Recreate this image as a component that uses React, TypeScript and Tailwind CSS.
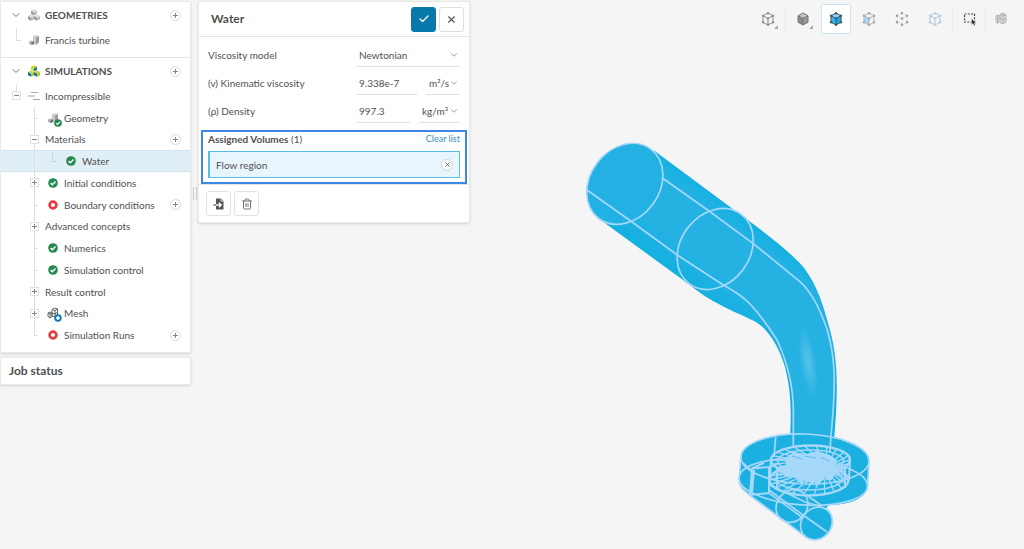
import { useId, useState } from 'react'
import type { ReactNode } from 'react'
import { Check, ChevronDown, Trash2, X } from 'lucide-react'

type Status = 'done' | 'open' | 'geometry' | 'mesh' | 'none';

type TreeItem = {
  label: string;
  status: Status;
  expandable?: boolean;
  expanded?: boolean;
  addable?: boolean;
  nested?: boolean;
  last?: boolean;
};

const treeItems: TreeItem[] = [
  { label: 'Geometry', status: 'geometry' },
  { label: 'Materials', status: 'none', expandable: true, expanded: true, addable: true },
  { label: 'Water', status: 'done', nested: true },
  { label: 'Initial conditions', status: 'done', expandable: true },
  { label: 'Boundary conditions', status: 'open', addable: true },
  { label: 'Advanced concepts', status: 'none', expandable: true },
  { label: 'Numerics', status: 'done' },
  { label: 'Simulation control', status: 'done' },
  { label: 'Result control', status: 'none', expandable: true },
  { label: 'Mesh', status: 'mesh', expandable: true },
  { label: 'Simulation Runs', status: 'open', addable: true, last: true },
];

const DoneIcon = ({ className = 'size-[10px]' }: { className?: string }) => (
  <svg viewBox="0 0 10 10" className={className} aria-hidden="true">
    <circle cx="5" cy="5" r="4.8" fill="#22894f" />
    <path d="M2.6 5.1 4.4 6.8 7.5 3.6" fill="none" stroke="#fff" strokeWidth="1.5" />
  </svg>
);

const OpenIcon = () => (
  <svg viewBox="0 0 10 10" className="size-[10px]" aria-hidden="true">
    <circle cx="5" cy="5" r="3.4" fill="#fff" stroke="#e5383f" strokeWidth="2.7" />
  </svg>
);

const PartIcon = () => (
  <svg viewBox="0 0 12 12" className="size-[12px]" aria-hidden="true">
    <path d="M5 2 8 1 11 2V8L8 11 5 9.5Z" fill="#c9c9c9" />
    <path d="M8 3 11 2V8L8 11Z" fill="#9c9c9c" />
    <path d="M5 2 8 1 11 2 8 3Z" fill="#e4e4e4" />
    <path d="M1 7.5 3.5 6.5 6 7.5V10L3.5 11 1 10Z" fill="#b4b4b4" />
    <path d="M3.5 8.3 6 7.5V10L3.5 11Z" fill="#707070" />
  </svg>
);

const ClusterIcon = ({ colored = false }: { colored?: boolean }) => {
  const top = colored ? '#c9d433' : '#dadada';
  const left = colored ? '#0b73ae' : '#9c9c9c';
  const right = colored ? '#b3c32b' : '#bcbcbc';
  const cubes = [[6, 0.2], [3, 5.6], [9, 5.6]];
  return (
    <svg viewBox="0 0 12 12" className="size-[12px]" aria-hidden="true">
      {cubes.map(([x, y]) => (
        <g key={`${x}-${y}`} transform={`translate(${x} ${y})`}>
          <path d="M0 0 3 1.5 0 3.2-3 1.5Z" fill={top} />
          <path d="M-3 1.5 0 3.2V6.2L-3 4.6Z" fill={colored && y < 1 ? top : left} />
          <path d="M0 3.2 3 1.5V4.6L0 6.2Z" fill={colored && y < 1 ? left : right} />
        </g>
      ))}
    </svg>
  );
};

const MeshIcon = () => (
  <svg viewBox="0 0 12 12" className="size-[12px]" aria-hidden="true">
    <g fill="none" stroke="#555" strokeWidth="0.9">
      <path d="M5 2.5 7.5 1 10.5 2V8L8 10 5 9Z" />
      <path d="M5 2.5 8 3.5 10.5 2M8 3.5V10M5 6 8 7 10.5 5" />
      <path d="M1 6 3 5 5 6V9.5L3 10.8 1 9.6ZM1 6 3 7 5 6M3 7V10.8" />
    </g>
  </svg>
);

const LinesIcon = () => (
  <svg viewBox="0 0 12 10" className="h-[10px] w-[12px]" aria-hidden="true">
    <path d="M3 1.5H10M0 5H7M5 8.5H12" stroke="#a5a5a5" strokeWidth="1.1" />
  </svg>
);

const SmallSign = ({ minus = false }: { minus?: boolean }) => (
  <svg viewBox="0 0 5 5" className="size-[5px]" shapeRendering="crispEdges" aria-hidden="true">
    <path d={minus ? 'M0 2.5H5' : 'M0 2.5H5M2.5 0V5'} stroke="#858585" strokeWidth="1" />
  </svg>
);

const StatusIcon = ({ status }: { status: Status }) => (
  <span className="relative flex w-[16px] items-center justify-center">
    {status === 'done' && <DoneIcon />}
    {status === 'open' && <OpenIcon />}
    {status === 'geometry' && (
      <>
        <PartIcon />
        <DoneIcon className="absolute -right-px -bottom-[3px] size-[8px]" />
      </>
    )}
    {status === 'mesh' && (
      <>
        <MeshIcon />
        <svg viewBox="0 0 8 8" className="absolute -right-px -bottom-[3px] size-[8px]" aria-hidden="true">
          <circle cx="4" cy="4" r="3.7" fill="#0878b5" />
          <path d="M4 2V6M2 4H6" stroke="#fff" strokeWidth="1.6" />
        </svg>
      </>
    )}
  </span>
);

const AddButton = ({ label }: { label: string }) => (
  <button
    type="button"
    aria-label={`Add to ${label}`}
    className="ml-auto flex size-[11px] items-center justify-center rounded-full border border-[#d9d9d9] bg-white"
  >
    <SmallSign />
  </button>
);

const ToggleBox = ({ label, expanded }: { label: string; expanded?: boolean }) => (
  <button
    type="button"
    aria-label={`Toggle ${label}`}
    aria-expanded={!!expanded}
    className="relative flex size-[9px] items-center justify-center border border-[#e0e0e0] bg-white"
  >
    <SmallSign minus={expanded} />
  </button>
);

const GroupHeader = ({ label, icon }: { label: string; icon: ReactNode }) => (
  <div className="flex h-[26px] items-center pr-[9px] pl-[6px]">
    <button type="button" aria-label={`Collapse ${label}`} className="flex w-[18px] justify-center text-[#777]">
      <ChevronDown size={12} strokeWidth={2} />
    </button>
    <span className="flex w-[18px] justify-center">{icon}</span>
    <h2 className="pl-[2px] font-bold">{label}</h2>
    <AddButton label={label} />
  </div>
);

const TreeRow = ({ item }: { item: TreeItem }) => (
  <li
    className={`flex items-center pr-[9px] pl-[24px] ${
      item.nested ? 'border-y border-[#cfe4ee] bg-[#e0eff6]' : ''
    }`}
  >
    <span className="relative flex w-[18px] items-center justify-center self-stretch">
      <span
        className={`absolute top-0 left-[9px] w-px bg-[#dedede] ${item.last ? 'h-1/2' : 'h-full'}`}
      />
      {item.expandable && <ToggleBox label={item.label} expanded={item.expanded} />}
      {!item.expandable && !item.nested && (
        <span className="absolute top-1/2 left-[9px] h-px w-[4px] bg-[#dedede]" />
      )}
    </span>
    {item.nested && (
      <span className="flex w-[18px] justify-end self-stretch pt-[2px] pr-[5px]">
        <span className="h-[9px] w-[4px] border-b border-l border-[#c8d3d9]" />
      </span>
    )}
    <span className="w-[2px]" />
    {item.status !== 'none' && <StatusIcon status={item.status} />}
    <span className={`whitespace-nowrap ${item.status === 'none' ? '' : 'pl-[3px]'}`}>
      {item.label}
    </span>
    {item.addable && <AddButton label={item.label} />}
  </li>
);

const Sidebar = () => (
  <aside className="w-[192px] shrink-0 pt-px pr-px">
    <nav aria-label="Project" className="border border-[#e9e9e9] bg-white text-[10px] shadow-sm">
      <section className="border-b border-[#e4e4e4] pb-[5px]">
        <GroupHeader label="GEOMETRIES" icon={<ClusterIcon />} />
        <div className="flex h-[24px] items-center pl-[6px]">
          <span className="flex w-[18px] justify-end self-stretch pr-[4px]">
            <span className="h-[13px] w-[5px] border-b border-l border-[#dedede]" />
          </span>
          <span className="flex w-[18px] justify-center"><PartIcon /></span>
          <span className="pl-[2px]">Francis turbine</span>
        </div>
      </section>
      <section className="pb-[6px]">
        <GroupHeader label="SIMULATIONS" icon={<ClusterIcon colored />} />
        <ul className="mt-px grid h-[261px] auto-rows-fr">
          <li className="flex items-center pl-[6px]">
            <span className="relative flex w-[18px] items-center justify-center self-stretch">
              <span className="absolute top-0 left-[9px] h-1/2 w-px bg-[#dedede]" />
              <ToggleBox label="Incompressible" expanded />
            </span>
            <span className="flex w-[18px] justify-center"><LinesIcon /></span>
            <span className="pl-[2px]">Incompressible</span>
          </li>
          {treeItems.map((item) => (
            <TreeRow key={item.label} item={item} />
          ))}
        </ul>
      </section>
    </nav>
    <div className="mt-[4px] flex h-[28px] items-center border border-[#e9e9e9] bg-white pl-[8px] shadow-sm">
      <h2 className="text-[12px] font-bold">Job status</h2>
    </div>
  </aside>
);

const SelectField = ({ id, label, options, className }: {
  id: string;
  label?: string;
  options: string[];
  className: string;
}) => (
  <span className={`relative flex items-center border-b border-[#e2e2e2] ${className}`}>
    <select
      id={id}
      aria-label={label}
      className="h-[23px] w-full appearance-none bg-transparent pl-[3px] outline-none"
    >
      {options.map((option) => (
        <option key={option}>{option}</option>
      ))}
    </select>
    <ChevronDown size={10} strokeWidth={2} className="pointer-events-none absolute right-px text-[#888]" />
  </span>
);

const ValueField = ({ label, initial, unit, unitClass }: {
  label: string;
  initial: string;
  unit: string;
  unitClass: string;
}) => {
  const id = useId();
  const [value, setValue] = useState(initial);
  return (
    <div className="flex h-[24px] items-center">
      <label htmlFor={id} className="w-[148px] shrink-0">{label}</label>
      <input
        id={id}
        value={value}
        onChange={(e) => setValue(e.target.value)}
        className="h-[24px] min-w-0 flex-1 border-b border-[#e2e2e2] bg-transparent pl-[3px] outline-none"
      />
      <SelectField id={`${id}-unit`} label={`${label} unit`} options={[unit]} className={unitClass} />
    </div>
  );
};

const toolButton = 'flex size-[25px] items-center justify-center rounded-[3px] border';

const MaterialPanel = () => {
  const [assigned, setAssigned] = useState(['Flow region']);

  return (
    <section className="mt-px w-[272px] shrink-0 self-start border border-[#e9e9e9] bg-white text-[10px] shadow-sm">
      <header className="flex h-[35px] items-center gap-[3px] border-b border-[#e4e4e4] pr-[5px] pl-[12px]">
        <h1 className="mr-auto text-[12px] font-bold">Water</h1>
        <button type="button" aria-label="Apply" className={`${toolButton} border-[#0878ab] bg-[#0878ab] text-white`}>
          <Check size={12} strokeWidth={2.5} />
        </button>
        <button type="button" aria-label="Close" className={`${toolButton} border-[#dedede] text-[#555]`}>
          <X size={11} strokeWidth={2.5} />
        </button>
      </header>
      <div className="flex flex-col gap-[4px] pt-[6px] pr-[9px] pb-[7px] pl-[9px]">
        <div className="flex h-[24px] items-center">
          <label htmlFor="viscosity-model" className="w-[148px] shrink-0">Viscosity model</label>
          <SelectField id="viscosity-model" options={['Newtonian']} className="flex-1" />
        </div>
        <ValueField label="(v) Kinematic viscosity" initial="9.338e-7" unit="m²/s" unitClass="ml-[9px] w-[34px]" />
        <ValueField label="(ρ) Density" initial="997.3" unit="kg/m³" unitClass="ml-[9px] w-[41px]" />
      </div>
      <div className="mx-[2px] border-2 border-[#3f87e5] px-[5px] pb-[4px]">
        <div className="flex h-[19px] items-center justify-between pb-[5px]">
          <h2><strong>Assigned Volumes</strong> (1)</h2>
          <button type="button" onClick={() => setAssigned([])} className="text-[9px] text-[#2e93bb]">
            Clear list
          </button>
        </div>
        {assigned.map((name) => (
          <div key={name} className="flex h-[27px] items-center justify-between border border-l-2 border-[#56bde3] bg-[#e9f5fc] pr-[6px] pl-[6px]">
            <span>{name}</span>
            <button
              type="button"
              aria-label={`Remove ${name}`}
              onClick={() => setAssigned(assigned.filter((n) => n !== name))}
              className="flex size-[12px] items-center justify-center rounded-full border border-[#d2d2d2] bg-white text-[#555]"
            >
              <X size={7} strokeWidth={3} />
            </button>
          </div>
        ))}
      </div>
      <footer className="flex gap-[3px] border-t border-[#e4e4e4] px-[7px] py-[6px]">
        <button type="button" aria-label="Import material" className={`${toolButton} border-[#e2e2e2]`}>
          <svg viewBox="0 0 12 12" className="size-[12px]" aria-hidden="true">
            <path d="M3 0.5H8L10.5 3V11.5H3Z" fill="#555" />
            <path d="M8 0.5V3H10.5" fill="none" stroke="#fff" strokeWidth="0.8" />
            <path d="M3 7H8M6 4.8 8.3 7 6 9.2" fill="none" stroke="#fff" strokeWidth="1.3" />
            <path d="M0.5 7H3" stroke="#555" strokeWidth="1.3" />
          </svg>
        </button>
        <button type="button" aria-label="Delete material" className={`${toolButton} border-[#e2e2e2] text-[#777]`}>
          <Trash2 size={12} strokeWidth={2} />
        </button>
      </footer>
    </section>
  );
};

type CubeProps = {
  stroke?: string;
  top?: string;
  left?: string;
  right?: string;
  dots?: string;
  dashed?: boolean;
};

const CubeIcon = ({ stroke = '#a2a2a2', top = 'none', left = 'none', right = 'none', dots, dashed }: CubeProps) => (
  <svg viewBox="0 0 14 14" className="size-[14px]" aria-hidden="true">
    <path d="M7 1 12 3.7 7 6.4 2 3.7Z" fill={top} />
    <path d="M2 3.7 7 6.4V13L2 10.3Z" fill={left} />
    <path d="M12 3.7 7 6.4V13L12 10.3Z" fill={right} />
    <path
      d="M7 1 12 3.7V10.3L7 13 2 10.3V3.7ZM2 3.7 7 6.4 12 3.7M7 6.4V13"
      fill="none"
      stroke={stroke}
      strokeWidth="1"
      strokeDasharray={dashed ? '1 1.5' : undefined}
    />
    {dots && [[7, 1.3], [12, 3.7], [12, 10.3], [7, 12.7], [2, 10.3], [2, 3.7], [7, 6.5]].map(([x, y]) => (
      <circle key={`${x}-${y}`} cx={x} cy={y} r="1.2" fill={dots} />
    ))}
  </svg>
);

const Corner = () => (
  <svg viewBox="0 0 4 4" className="absolute right-[4px] bottom-[4px] size-[4px]" aria-hidden="true">
    <path d="M4 0V4H0Z" fill="#aaa" />
  </svg>
);

const viewButton = 'relative flex h-[30px] w-[30px] items-center justify-center rounded-[2px] border';

const Toolbar = () => (
  <div role="toolbar" aria-label="View" className="flex h-[40px] items-center justify-end gap-[3px] pr-[8px] pb-[2px]">
    <button type="button" aria-label="Wireframe view" className={`${viewButton} border-transparent`}>
      <CubeIcon stroke="#8d8d8d" dots="#8d8d8d" /><Corner />
    </button>
    <span className="-mx-px h-[26px] w-px bg-[#ebebeb]" />
    <button type="button" aria-label="Shaded view" className={`${viewButton} border-transparent`}>
      <CubeIcon stroke="#777" top="#c4c4c4" left="#8b8b8b" right="#999" /><Corner />
    </button>
    <button type="button" aria-label="Select volumes" aria-pressed="true" className={`${viewButton} border-[#c9e5f3] bg-white`}>
      <CubeIcon stroke="#3f5660" top="#8ed6f6" left="#2eb8ee" right="#18a8e3" dots="#4b5960" />
    </button>
    <button type="button" aria-label="Select faces" className={`${viewButton} border-transparent`}>
      <CubeIcon stroke="#b5b5b5" left="#a4dcf8" dots="#aaa" />
    </button>
    <button type="button" aria-label="Select nodes" className={`${viewButton} border-transparent`}>
      <CubeIcon stroke="#b9cfdb" dots="#9a9a9a" dashed />
    </button>
    <button type="button" aria-label="Select edges" className={`${viewButton} border-transparent`}>
      <CubeIcon stroke="#bcc3c8" dots="#a7d4ee" />
    </button>
    <span className="-mx-px h-[26px] w-px bg-[#ebebeb]" />
    <button type="button" aria-label="Box select" className={`${viewButton} border-transparent`}>
      <svg viewBox="0 0 14 14" className="size-[14px]" aria-hidden="true">
        <path d="M1.5 2H11.5V10H1.5Z" fill="none" stroke="#444" strokeWidth="1.2" strokeDasharray="2 1.3" />
        <path d="M8.5 6.5V13L10 11.6 11.2 13.8 12.3 13.2 11.2 11.2H13.3Z" fill="#333" stroke="#f5f5f5" strokeWidth="0.4" />
      </svg>
    </button>
    <span className="-mx-[3px] h-[26px] w-px bg-[#ebebeb]" />
    <button type="button" aria-label="Toggle mesh" className={`${viewButton} border-transparent`}>
      <svg viewBox="0 0 14 14" className="size-[14px]" aria-hidden="true">
        <path d="M6 2.5 9 1 12 3V10L9 12 6 10.5Z" fill="#dadada" />
        <path
          d="M6 2.5 9 1 12 3V10L9 12 6 10.5ZM6 2.5 9 4 12 3M9 1V12M6 6.5 9 8 12 6.5M2 4 5 3V10L4 11.5 2 10ZM2 7H5M3.5 3.5V11"
          fill="none"
          stroke="#b2b2b2"
        />
      </svg>
    </button>
  </div>
);

const blades = Array.from({ length: 22 }, (_, i) => {
  const a = (i / 22) * Math.PI * 2;
  const b = a + 0.3;
  return { cos: Math.cos(a), sin: Math.sin(a), cos2: Math.cos(b), sin2: Math.sin(b) };
});

// Francis turbine: draft pipe, spiral casing, inlet nozzle and runner wireframe
const TurbineModel = () => (
  <svg viewBox="470 40 554 509" className="min-h-0 w-full flex-1" role="img" aria-label="Flow region of the Francis turbine">
    <defs>
      <radialGradient id="glare">
        <stop offset="0" stopColor="#58c3ea" />
        <stop offset="1" stopColor="#58c3ea" stopOpacity="0" />
      </radialGradient>
      <linearGradient id="pipe" gradientUnits="userSpaceOnUse" x1="640" y1="250" x2="697" y2="176">
        <stop offset="0" stopColor="#12b0e0" />
        <stop offset="0.35" stopColor="#25b2e3" />
        <stop offset="0.75" stopColor="#25b2e3" />
        <stop offset="1" stopColor="#12b0e0" />
      </linearGradient>
    </defs>
    <path
      d="M654 150.5 746.7 219.3C768 235 786 249 800 263.3C817 282 824 308 830 330C837 356 839 383 834 441H790C791 415 792 395 785 367C779 347 768 328 754 321C740 314 727 309 713 301C702 295 693 287 683 280L603 221.7Z"
      fill="url(#pipe)"
    />
    <ellipse cx="624.8" cy="183.8" rx="43.4" ry="34.7" transform="rotate(-53 624.8 183.8)" fill="#22b1e2" />
    <path d="M793 412C794 390 789 366 777 340C770 329 763 318 751 305L815 302C824 318 835 356 835 380L831 436H793Z" fill="#25b2e3" />
    <ellipse cx="808" cy="362" rx="8" ry="36" transform="rotate(-9 808 362)" fill="url(#glare)" />
    <path d="M741 458C741 444 768 434 803 434C840 434 869 446 869 461L867.5 487C866 498 850 505 829 505L826 508C832 512 833 519 831 526C829 535 822 541 815 540L806 537 745 491C741 489 739 485 739 480Z" fill="#1cb0e1" />
    <g fill="none" stroke="#a6d8fa" strokeWidth="1.7">
      <ellipse cx="624.8" cy="183.8" rx="43.4" ry="34.7" transform="rotate(-53 624.8 183.8)" />
      <ellipse cx="715.2" cy="249" rx="43.4" ry="34.7" transform="rotate(-53 715.2 249)" />
      <path d="M587 190 630.7 221 677.3 255 723.3 285C736 292 744 297 751 305C763 318 770 329 777 340C789 366 793.5 390 793.3 412V448" />
      <path d="M662.7 178.3 709 211 753 243.3 800 281.7C813 294 820 310 826.7 328C835 356 836.5 380 831 436L830 452" />
      <ellipse cx="805" cy="459" rx="64" ry="25" transform="rotate(2 805 459)" />
      <ellipse cx="803.3" cy="482" rx="64.4" ry="23" transform="rotate(4 803.3 482)" />
      <path d="M741 457 739 480M869 461 867.5 487M775.7 437 774 457M739 482C741 489 745 491 752 497L806 537" />
      <path d="M752 468.5 769 467V493L750 495ZM754 470 752 493M752 468.5 764 463M769 467 777 464" strokeWidth="2" />
      <ellipse cx="816.5" cy="523.5" rx="17.2" ry="15" transform="rotate(-50 816.5 523.5)" />
      <ellipse cx="792" cy="506" rx="17.2" ry="15" transform="rotate(-50 792 506)" />
      <path d="M769 490 803 515 827 532M769 493 803 518M770 485 805 502 822 507M808 496 822 506M743 463 755 474" />
      <ellipse cx="810.5" cy="460" rx="39.5" ry="14.5" strokeWidth="2.4" />
      <ellipse cx="809" cy="480" rx="39.5" ry="15.5" strokeWidth="2.4" />
      <ellipse cx="810.5" cy="461" rx="33" ry="11" />
      <ellipse cx="809" cy="479" rx="33" ry="11" />
      <path d="M771 459 770 480M850 460 849 480M777 467V488M845 467V488" strokeWidth="2" />
    </g>
    <g stroke="#a6d8fa" strokeWidth="1.4">
      {blades.map((blade, i) => (
        <g key={i}>
          <line
            x1={810.5 + blade.cos * 39}
            y1={460 + blade.sin * 14}
            x2={810.5 + blade.cos2 * 24}
            y2={463 + blade.sin2 * 8}
          />
          <line
            x1={809 + blade.cos2 * 39}
            y1={480 + blade.sin2 * 15}
            x2={810 + blade.cos * 22}
            y2={474 + blade.sin * 7}
          />
        </g>
      ))}
    </g>
    <path
      d="M785 458 794 452 806 454 817 451 830 455 837 460 834 468 845 470 834 475 832 480 823 480 817 486 809 482 801 484 795 478 785 477 781 470 775 468 786 465Z"
      fill="#a6d8fa"
    />
    <path d="M792 456 802 459M804 456 816 458M821 457 829 461M794 477 799 484M804 480V489M814 482 817 490M824 477 829 484" stroke="#57c0ec" fill="none" />
  </svg>
);

const App = () => (
  <div className="flex h-screen min-h-[400px] overflow-hidden bg-[#f5f5f5] font-['Lato',sans-serif] leading-4 text-[#505050]">
    <Sidebar />
    <div className="flex w-[6px] shrink-0 justify-center pt-[187px]">
      <span className="h-[13px] w-[4px] border-x border-[#cfcfcf]" />
    </div>
    <MaterialPanel />
    <main className="flex min-w-0 flex-1 flex-col">
      <Toolbar />
      <TurbineModel />
    </main>
  </div>
);

export default App;
